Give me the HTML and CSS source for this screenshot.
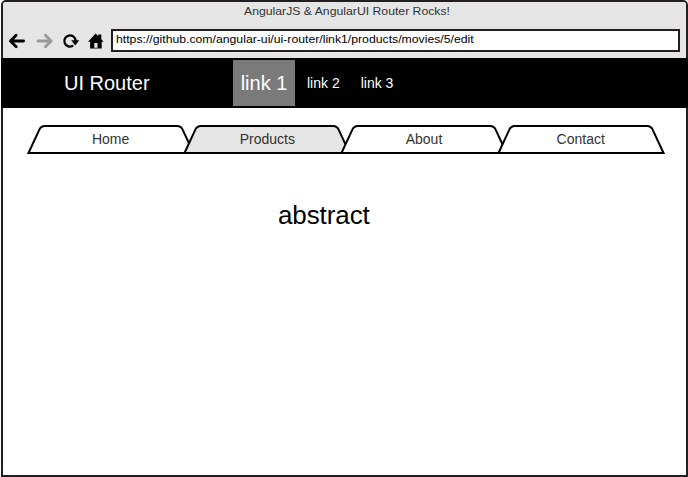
FILE: index.html
```html
<!DOCTYPE html>
<html lang="en">
<head>
<meta charset="utf-8">
<title>AngularJS &amp; AngularUI Router Rocks!</title>
<link rel="stylesheet" href="styles.css">
</head>
<body>
<div class="window">
  <header class="chrome">
    <div class="title"><span class="wide">AngularJS &amp; AngularUI Router Rocks!</span></div>
    <div class="toolbar">
      <svg class="icon" width="18" height="18" viewBox="0 0 18 18"><path d="M3 9H15.6M8.2 3.2L2.4 9l5.8 5.8" fill="none" stroke="#000" stroke-width="2.8" stroke-linecap="round" stroke-linejoin="round"/></svg>
      <svg class="icon forward" width="18" height="18" viewBox="0 0 18 18"><path d="M2 9H14.6M9.4 3.2l5.8 5.8l-5.8 5.8" fill="none" stroke="#999" stroke-width="2.8" stroke-linecap="round" stroke-linejoin="round"/></svg>
      <svg class="icon reload" width="18" height="18" viewBox="0 0 18 18"><path d="M10.4 14A5.6 5.6 0 1 1 13.5 8.4" fill="none" stroke="#000" stroke-width="2.3" stroke-linecap="round"/><path d="M9.2 8.2H17.2L13.2 13.4Z"/></svg>
      <svg class="icon home" width="18" height="18" viewBox="0 0 18 18"><path d="M1 9.8L8.7 1.6l2.6 2.6V2.6h3v4.6l2.4 2.6H14.7V16.6H3.1V9.8Z"/><path d="M7.3 11h3.2v4.8H7.3Z" fill="#e5e5e5"/></svg>
      <div class="address"><span class="wide">https://github.com/angular-ui/ui-router/link1/products/movies/5/edit</span></div>
    </div>
  </header>
  <nav class="navbar">
    <div class="brand">UI Router</div>
    <a class="link active">link 1</a>
    <a class="link">link 2</a>
    <a class="link last">link 3</a>
  </nav>
  <main class="content">
    <div class="tabs">
      <div class="tab"><svg class="shape" width="168" height="31" viewBox="0 0 168 31"><path d="M1.5 29L12 6.3Q13.7 2 18 2H150Q154.3 2 156 6.3L166.5 29Z"/></svg><span>Home</span></div>
      <div class="tab selected"><svg class="shape" width="168" height="31" viewBox="0 0 168 31"><path d="M1.5 29L12 6.3Q13.7 2 18 2H150Q154.3 2 156 6.3L166.5 29Z"/></svg><span>Products</span></div>
      <div class="tab"><svg class="shape" width="168" height="31" viewBox="0 0 168 31"><path d="M1.5 29L12 6.3Q13.7 2 18 2H150Q154.3 2 156 6.3L166.5 29Z"/></svg><span>About</span></div>
      <div class="tab"><svg class="shape" width="168" height="31" viewBox="0 0 168 31"><path d="M1.5 29L12 6.3Q13.7 2 18 2H150Q154.3 2 156 6.3L166.5 29Z"/></svg><span>Contact</span></div>
    </div>
    <p class="view">abstract</p>
  </main>
</div>
</body>
</html>
```

FILE: styles.css
```css
* { box-sizing: border-box; }
body { margin: 0; background: #fff; font-family: "Liberation Sans", Arial, sans-serif; color: #000; }
.window { width: 687px; height: 477px; margin-left: 1px; border: 2px solid #231f20; border-radius: 5px 5px 0 0; background: #fff; }
.chrome { height: 56px; background: #e5e5e5; border-radius: 3px 3px 0 0; padding-right: 6px; }
.title { height: 27px; padding-left: 241px; font-size: 11px; line-height: 18px; color: #333; white-space: nowrap; }
.wide { display: inline-block; transform: scaleX(1.112); transform-origin: left; }
.toolbar { display: flex; height: 23px; padding-left: 5px; align-items: center; }
.icon { flex: none; }
.forward { margin-left: 10px; }
.reload { margin-left: 8px; }
.home { margin-left: 7px; }
.address { flex: 1; height: 23px; margin-left: 6px; border: 2px solid #231f20; background: #fff; padding-left: 3px; font-size: 11px; line-height: 17px; white-space: nowrap; }
.navbar { display: flex; align-items: center; height: 50px; margin: 0 -2px; padding-left: 63px; background: #000; color: #fff; }
.brand { width: 169px; font-size: 20px; }
.link { font-size: 14px; margin-left: 12px; }
.link.active { height: 46px; width: 62px; margin-left: 0; background: #7a7a7a; font-size: 20px; line-height: 46px; text-align: center; }
.link.last { margin-left: 21px; }
.content { padding: 16px 0 0 23.6px; }
.tabs { display: flex; }
.tab { position: relative; width: 168px; height: 31px; margin-right: -11.3px; text-align: center; font-size: 14px; line-height: 31px; color: #333; }
.shape { position: absolute; left: 0; top: 0; fill: #fff; stroke: #000; stroke-width: 2; }
.selected .shape { fill: #e5e5e5; }
.tab span { position: relative; }
.view { margin: 45px 0 0 251.4px; font-size: 26px; line-height: 30px; letter-spacing: -0.1px; }
```
